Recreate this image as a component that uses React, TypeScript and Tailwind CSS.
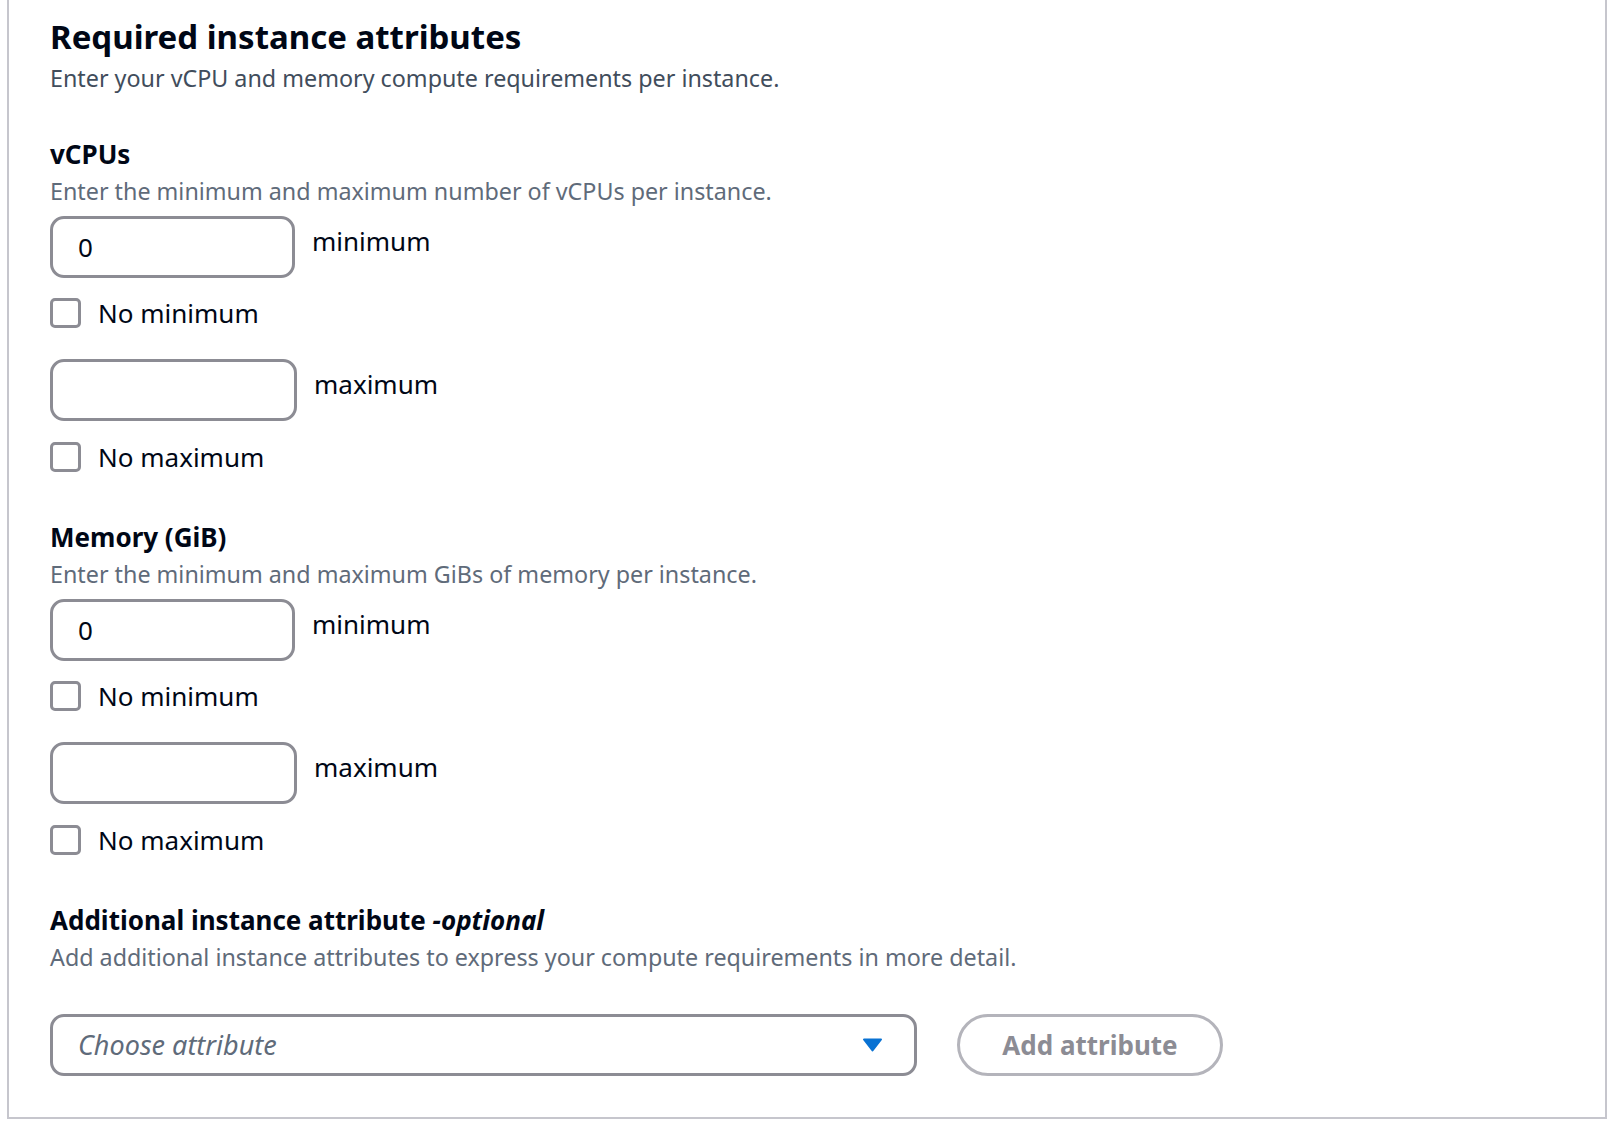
import { useState } from "react";

const font = { fontFamily: '"Noto Sans", "Open Sans", Arial, sans-serif' };

function NumberField({ label, value, wide }: { label: string; value: string; wide?: boolean }) {
  return (
    <div className="flex items-start">
      <div
        className={`h-[62px] ${wide ? "w-[247px]" : "w-[245px]"} rounded-[14px] border-[3px] border-[#8c8c94] bg-white flex items-center pl-[25px] text-[26px] text-[#000716]`}
      >
        {value}
      </div>
      <span className="ml-[17px] mt-[7px] text-[26px] leading-[36px] text-[#000716]">{label}</span>
    </div>
  );
}

function Check({ label }: { label: string }) {
  const [on, setOn] = useState(false);
  return (
    <label className="flex items-center h-[30px] cursor-pointer" onClick={() => setOn(!on)}>
      <span className="w-[31px] h-[30px] rounded-[5px] border-[3px] border-[#8c8c94] bg-white flex items-center justify-center">
        {on && <span className="w-[14px] h-[14px] bg-[#0972d3] rounded-sm" />}
      </span>
      <span className="ml-[17px] text-[26px] leading-[30px] text-[#000716]">{label}</span>
    </label>
  );
}

function RangeGroup({ title, desc }: { title: string; desc: string }) {
  return (
    <div className="flex flex-col">
      <h3 className="text-[26px] leading-[32px] font-bold text-[#000716]">{title}</h3>
      <p className="mt-[6px] text-[23.3px] leading-[30px] text-[#5f6b7a]">{desc}</p>
      <div className="mt-[10px]">
        <NumberField label="minimum" value="0" />
      </div>
      <div className="mt-[20px]">
        <Check label="No minimum" />
      </div>
      <div className="mt-[31px]">
        <NumberField label="maximum" value="" wide />
      </div>
      <div className="mt-[21px]">
        <Check label="No maximum" />
      </div>
    </div>
  );
}

export default function App() {
  return (
    <div className="min-h-screen bg-white" style={font}>
      <div className="ml-[7px] w-[1600px] border-x-2 border-b-2 border-[#c6c6cd] pl-[41px] pt-[15px] pb-[41px]">
        <h2 className="text-[33px] leading-[44px] font-bold text-[#000716]">Required instance attributes</h2>
        <p className="mt-[4px] text-[23.3px] leading-[30px] text-[#414d5c]">
          Enter your vCPU and memory compute requirements per instance.
        </p>

        <div className="mt-[45px]">
          <RangeGroup title="vCPUs" desc="Enter the minimum and maximum number of vCPUs per instance." />
        </div>

        <div className="mt-[49px]">
          <RangeGroup title="Memory (GiB)" desc="Enter the minimum and maximum GiBs of memory per instance." />
        </div>

        <div className="mt-[49px]">
          <h3 className="text-[26px] leading-[32px] font-bold text-[#000716]">
            Additional instance attribute <i className="font-bold">-optional</i>
          </h3>
          <p className="mt-[6px] text-[23.3px] leading-[30px] text-[#5f6b7a]">
            Add additional instance attributes to express your compute requirements in more detail.
          </p>
          <div className="mt-[42px] flex items-center gap-[40px]">
            <button className="h-[62px] w-[867px] rounded-[14px] border-[3px] border-[#8c8c94] bg-white flex items-center justify-between pl-[25px] pr-[31px]">
              <span className="text-[27px] italic text-[#5f6b7a]">Choose attribute</span>
              <svg width="21" height="14" viewBox="0 0 21 14">
                <path d="M2 1.5 L19 1.5 L10.5 12.5 Z" fill="#0972d3" stroke="#0972d3" strokeWidth="2" strokeLinejoin="round" />
              </svg>
            </button>
            <button className="h-[62px] w-[266px] rounded-full border-[3px] border-[#b4b4bb] bg-white text-[26px] font-bold text-[#8c8c94]">
              Add attribute
            </button>
          </div>
        </div>
      </div>
    </div>
  );
}
